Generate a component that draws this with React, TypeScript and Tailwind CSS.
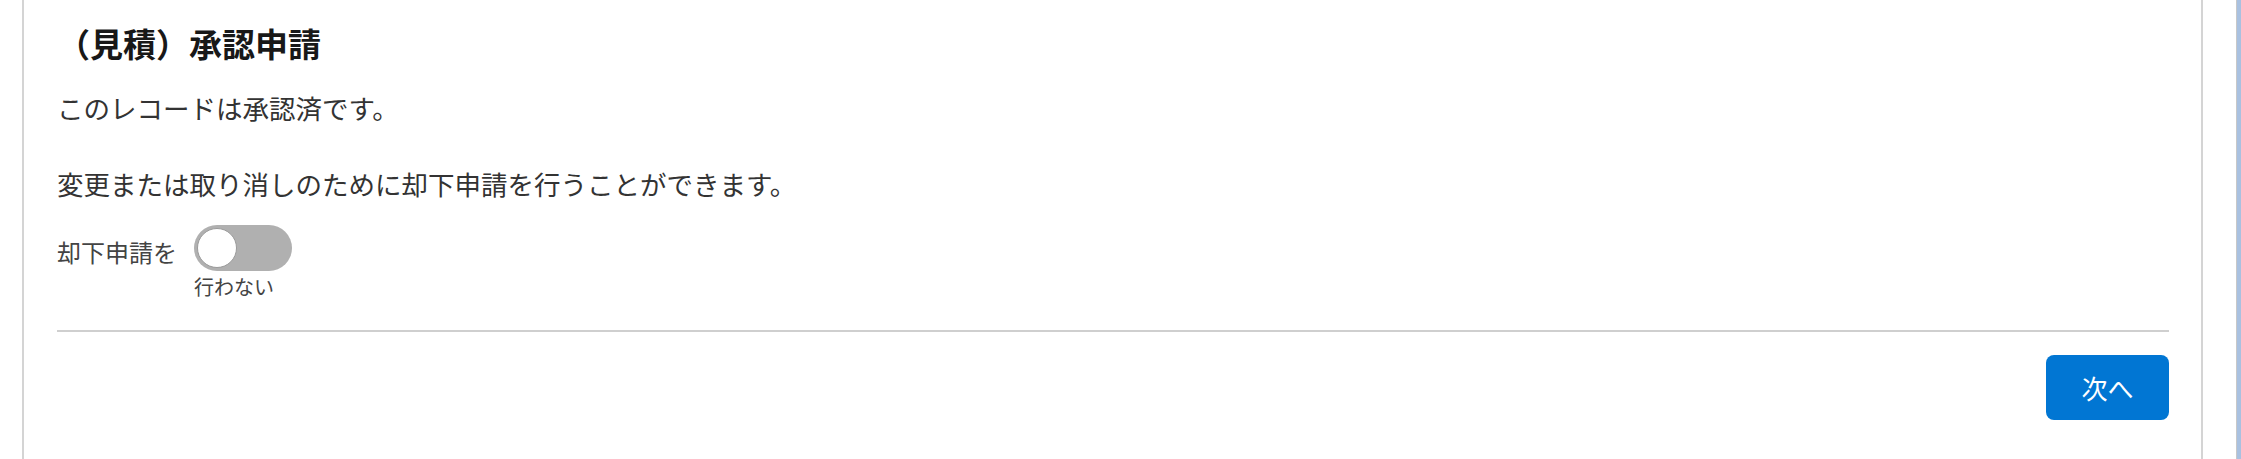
import React from "react";

export default function App() {
  const font = { fontFamily: '"Noto Sans CJK JP", "Noto Sans", sans-serif' };
  return (
    <div
      className="flex h-[459px] w-[2241px] overflow-hidden bg-white text-[#181818]"
      style={font}
    >
      <div className="w-[22px] shrink-0" />
      <div className="flex w-[2181px] shrink-0 flex-col border-x-2 border-[#d4d4d4] pl-[33px] pr-[32px] pt-[23px]">
        <h1 className="text-[33px] font-bold leading-[40px] text-[#181818]">
          （見積）承認申請
        </h1>
        <div className="mt-[26px] text-[26.5px] leading-[38px] text-[#333333]">
          <p>このレコードは承認済です。</p>
          <p>&nbsp;</p>
          <p>変更または取り消しのために却下申請を行うことができます。</p>
        </div>
        <div className="mt-[22px] flex items-start">
          <span className="mt-[9px] text-[24px] leading-[36px] text-[#444444]">
            却下申請を
          </span>
          <div className="ml-[17px] flex flex-col items-start">
            <div className="flex h-[46px] w-[98px] items-center rounded-full bg-[#b0b0b0] px-[3px]">
              <div className="h-[40px] w-[40px] rounded-full border border-[#9a9a9a] bg-white" />
            </div>
            <span className="mt-[4px] text-[20px] leading-[24px] text-[#444444]">
              行わない
            </span>
          </div>
        </div>
        <div className="mt-[31px] h-[2px] w-full bg-[#cfcfcf]" />
        <div className="mt-[23px] flex justify-end">
          <button className="flex h-[65px] w-[123px] items-center justify-center rounded-[8px] bg-[#0176d3] text-[26px] text-white">
            次へ
          </button>
        </div>
      </div>
      <div className="w-[33px] shrink-0" />
      <div className="w-[1px] shrink-0 bg-[#c8c8c8]" />
      <div className="w-[4px] shrink-0 bg-[#a9c1e0]" />
    </div>
  );
}
